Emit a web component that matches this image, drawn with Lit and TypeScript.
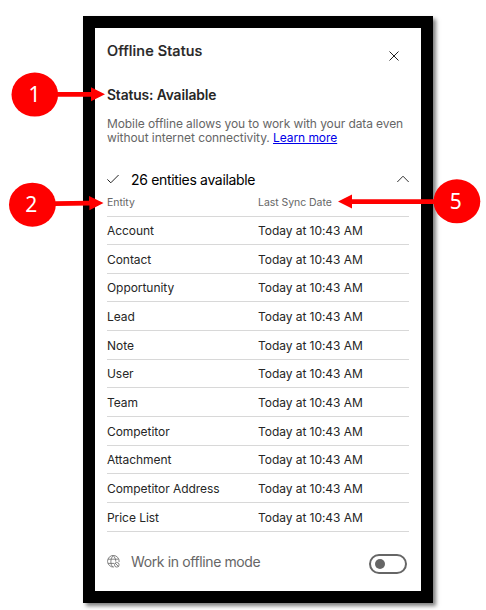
import { LitElement, html, css } from "lit";
import { customElement } from "lit/decorators.js";

const ENTITIES = [
  "Account", "Contact", "Opportunity", "Lead", "Note", "User", "Team",
  "Competitor", "Attachment", "Competitor Address", "Price List",
];

@customElement("app-root")
export class AppRoot extends LitElement {
  static styles = css`
    :host { display: block; position: relative; width: 486px; height: 610px; overflow: hidden; background: #fff; font-family: Inter, "Liberation Sans", sans-serif; color: #262626; }
    * { box-sizing: border-box; }
    .stage { display: flex; padding: 16px 0 0 83px; }
    .frame { width: 350px; height: 586.5px; border: 12px solid #000; background: #fff; box-shadow: 3px 3px 4px rgba(0, 0, 0, .5); padding: 0 12px; display: flex; flex-direction: column; white-space: nowrap; }
    .top { display: flex; justify-content: space-between; height: 55px; padding-top: 13px; }
    .title, .status { font-size: 14.5px; line-height: 20px; font-weight: 600; }
    .title { font-weight: 500; letter-spacing: .1px; -webkit-text-stroke: .2px #262626; }
    .close { width: 10px; height: 10px; margin: 10px 10px 0 0; }
    .status { margin-top: 2px; font-size: 13.8px; letter-spacing: -.11px; }
    .about { margin-top: 12px; font-size: 12px; line-height: 14px; color: #666; height: 28px; letter-spacing: -.09px; }
    .about span { display: block; }
    .l2 { letter-spacing: -.065px; }
    a { color: #0000e8; text-decoration: underline; }
    .summary { display: flex; align-items: center; height: 20px; margin-top: 24px; margin-bottom: 1px; font-size: 14px; color: #000; letter-spacing: -.33px; }
    .summary .check { width: 12px; height: 10px; margin-right: 12px; }
    .summary .chev { width: 12px; height: 8px; margin-left: auto; }
    .grid { display: grid; grid-template-columns: 151px 1fr; align-items: center; border-bottom: 1px solid #d8d8d8; }
    .head { height: 26.5px; font-size: 10.5px; color: #666; padding-bottom: 1px; letter-spacing: -.05px; }
    .row { height: 28.66px; font-size: 12px; letter-spacing: -.055px; padding-top: .4px; }
    .offline { display: flex; align-items: center; height: 22px; margin-top: 19px; font-size: 14px; color: #666; letter-spacing: -.38px; }
    .globe { width: 13px; height: 13px; margin-right: 11px; }
    .toggle { width: 38px; height: 20px; border: 2px solid #666; border-radius: 10px; margin: 5px 2px 0 auto; display: flex; align-items: center; padding-left: 4px; }
    .toggle i { width: 10px; height: 10px; border-radius: 50%; background: #666; }
    .marks { position: absolute; left: 0; top: 0; font-family: "Noto Sans", "Open Sans", sans-serif; }
    .marks text { font-size: 21px; fill: #fff; text-anchor: middle; }
  `;

  render() {
    return html`
      <div class="stage"><main class="frame">
        <div class="top">
          <div class="title">Offline Status</div>
          <svg class="close" viewBox="0 0 10 10" stroke="#222" stroke-width="1" fill="none"><path d="M.5.5l9 9M9.5.5l-9 9"/></svg>
        </div>
        <div class="status">Status: Available</div>
        <div class="about">
          <span class="l1">Mobile offline allows you to work with your data even</span>
          <span class="l2">without internet connectivity. <a>Learn more</a></span>
        </div>
        <div class="summary">
          <svg class="check" viewBox="0 0 12 10" stroke="#222" stroke-width="1" fill="none"><path d="M.4 5.4L3.8 8.8L11.6 1"/></svg>
          <span class="count">26 entities available</span>
          <svg class="chev" viewBox="0 0 12 8" stroke="#333" stroke-width="1" fill="none"><path d="M.3 7L6 1.2L11.7 7"/></svg>
        </div>
        <div class="grid head"><span>Entity</span><span>Last Sync Date</span></div>
        ${ENTITIES.map((name) => html`<div class="grid row"><span>${name}</span><span>Today at 10:43 AM</span></div>`)}
        <div class="offline">
          <svg class="globe" viewBox="0 0 13 13" stroke="#666" stroke-width=".8" fill="none">
            <path d="M7 12A5.8 5.8 0 1 1 12.1 7M5.6 12C3.2 9 3.2 3.5 6.2.6C8 2.4 8.8 4.5 8.8 6.6M1 4.2H11.6M1 8.4H7"/>
            <circle cx="9.8" cy="9.8" r="2.3"/><path d="M8.2 8.2l3.2 3.2"/>
          </svg>
          <span class="mode">Work in offline mode</span>
          <span class="toggle"><i></i></span>
        </div>
      </main></div>
      <svg class="marks" width="486" height="610" fill="#f00">
        <ellipse cx="34.8" cy="94.6" rx="23.3" ry="22"/>
        <path d="M57 91.9H91V87.3L105 94.3L91 101.3V96.8H57Z"/>
        <text x="34.4" y="101.7">1</text>
        <ellipse cx="32.4" cy="204.7" rx="23.4" ry="22"/>
        <path d="M55 201.3L89 200.8V196L103.5 203L89.4 210.2V205.4L55 206Z"/>
        <text x="31.3" y="212">2</text>
        <ellipse cx="456.9" cy="201.3" rx="23.4" ry="22"/>
        <path d="M435 199.2H352V194.6L338 201.6L352 208.6V204H435Z"/>
        <text x="455.8" y="208.7">5</text>
      </svg>`;
  }
}
